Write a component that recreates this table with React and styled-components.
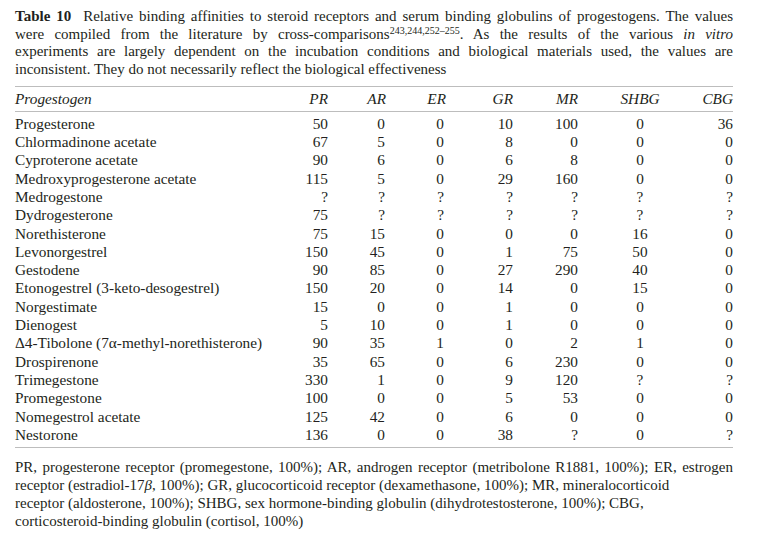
import React from 'react'
import styled, { createGlobalStyle } from 'styled-components'

const GlobalStyle = createGlobalStyle`
  html, body {
    margin: 0;
    background: #fff;
  }
  body {
    font-family: "Liberation Serif", "Times New Roman", serif;
    color: #231f20;
  }
`

const columns = ['PR', 'AR', 'ER', 'GR', 'MR', 'SHBG', 'CBG']

const rows = [
  ['Progesterone', '50', '0', '0', '10', '100', '0', '36'],
  ['Chlormadinone acetate', '67', '5', '0', '8', '0', '0', '0'],
  ['Cyproterone acetate', '90', '6', '0', '6', '8', '0', '0'],
  ['Medroxyprogesterone acetate', '115', '5', '0', '29', '160', '0', '0'],
  ['Medrogestone', '?', '?', '?', '?', '?', '?', '?'],
  ['Dydrogesterone', '75', '?', '?', '?', '?', '?', '?'],
  ['Norethisterone', '75', '15', '0', '0', '0', '16', '0'],
  ['Levonorgestrel', '150', '45', '0', '1', '75', '50', '0'],
  ['Gestodene', '90', '85', '0', '27', '290', '40', '0'],
  ['Etonogestrel (3-keto-desogestrel)', '150', '20', '0', '14', '0', '15', '0'],
  ['Norgestimate', '15', '0', '0', '1', '0', '0', '0'],
  ['Dienogest', '5', '10', '0', '1', '0', '0', '0'],
  ['Δ4-Tibolone (7α-methyl-norethisterone)', '90', '35', '1', '0', '2', '1', '0'],
  ['Drospirenone', '35', '65', '0', '6', '230', '0', '0'],
  ['Trimegestone', '330', '1', '0', '9', '120', '?', '?'],
  ['Promegestone', '100', '0', '0', '5', '53', '0', '0'],
  ['Nomegestrol acetate', '125', '42', '0', '6', '0', '0', '0'],
  ['Nestorone', '136', '0', '0', '38', '?', '0', '?'],
]

export default function App() {
  return (
    <Page>
      <GlobalStyle />
      <Caption>
        <CaptionLine $justify>
          <b>Table 10</b>
          <TitleGap />
          Relative binding affinities to steroid receptors and serum binding globulins of progestogens. The values
        </CaptionLine>
        <CaptionLine $justify>
          were compiled from the literature by cross-comparisons<sup>243,244,252–255</sup>. As the results of the various <i>in vitro</i>
        </CaptionLine>
        <CaptionLine $justify>
          experiments are largely dependent on the incubation conditions and biological materials used, the values are
        </CaptionLine>
        <CaptionLine>
          inconsistent. They do not necessarily reflect the biological effectiveness
        </CaptionLine>
      </Caption>

      <Table>
        <HeadRow>
          <HeadCell>Progestogen</HeadCell>
          {columns.map((c) => (
            <HeadCell key={c} $col={c}>{c}</HeadCell>
          ))}
        </HeadRow>
        <Body>
          {rows.map(([name, ...vals]) => (
            <Row key={name}>
              <NameCell>{name}</NameCell>
              {vals.map((v, i) => (
                <ValueCell key={i} $col={columns[i]}>{v}</ValueCell>
              ))}
            </Row>
          ))}
        </Body>
      </Table>

      <Footnote>
        <CaptionLine $justify>
          PR, progesterone receptor (promegestone, 100%); AR, androgen receptor (metribolone R1881, 100%); ER, estrogen
        </CaptionLine>
        <CaptionLine>
          receptor (estradiol-17<i>β</i>, 100%); GR, glucocorticoid receptor (dexamethasone, 100%); MR, mineralocorticoid
        </CaptionLine>
        <CaptionLine>
          receptor (aldosterone, 100%); SHBG, sex hormone-binding globulin (dihydrotestosterone, 100%); CBG,
        </CaptionLine>
        <CaptionLine>
          corticosteroid-binding globulin (cortisol, 100%)
        </CaptionLine>
      </Footnote>
    </Page>
  )
}

const Page = styled.div`
  width: 718px;
  padding: 8px 0 0 15px;
  font-size: 15px;
`

const Caption = styled.div`
  line-height: 17.7px;

  sup {
    font-size: 10px;
    line-height: 0;
    vertical-align: 5px;
  }
`

const CaptionLine = styled.div`
  text-align: ${(p) => (p.$justify ? 'justify' : 'left')};
  text-align-last: ${(p) => (p.$justify ? 'justify' : 'left')};
  white-space: ${(p) => (p.$justify ? 'normal' : 'nowrap')};
`

const TitleGap = styled.span`
  display: inline-block;
  width: 12px;
`

const Table = styled.div`
  margin-top: 7px;
  border-top: 1.5px solid #bdbdbd;
  border-bottom: 1.5px solid #bdbdbd;
  font-size: 15.3px;
`

const grid = `
  display: grid;
  grid-template-columns: 253px 60px 58px 60px 67px 65px 124px 31px;
`

const colAlign = {
  PR: 'right',
  AR: 'right',
  ER: 'right',
  GR: 'right',
  MR: 'right',
  SHBG: 'center',
  CBG: 'right',
}

const colPad = {
  PR: 0,
  AR: 1,
  ER: 2,
  GR: 0,
  MR: 0,
  SHBG: 0,
  CBG: 0,
}

const HeadRow = styled.div`
  ${grid}
  height: 24px;
  align-items: center;
  border-bottom: 1.5px solid #bdbdbd;
`

const HeadCell = styled.div`
  font-style: italic;
  white-space: nowrap;
  text-align: ${(p) => (p.$col ? colAlign[p.$col] : 'left')};
`

const Body = styled.div`
  padding: 3px 0 3px;
`

const Row = styled.div`
  ${grid}
  height: 18.3px;
  line-height: 18.3px;
`

const NameCell = styled.div`
  white-space: nowrap;
`

const ValueCell = styled.div`
  white-space: nowrap;
  text-align: ${(p) => colAlign[p.$col]};
  padding-right: ${(p) => colPad[p.$col]}px;
`

const Footnote = styled.div`
  margin-top: 10px;
  line-height: 18px;
`
